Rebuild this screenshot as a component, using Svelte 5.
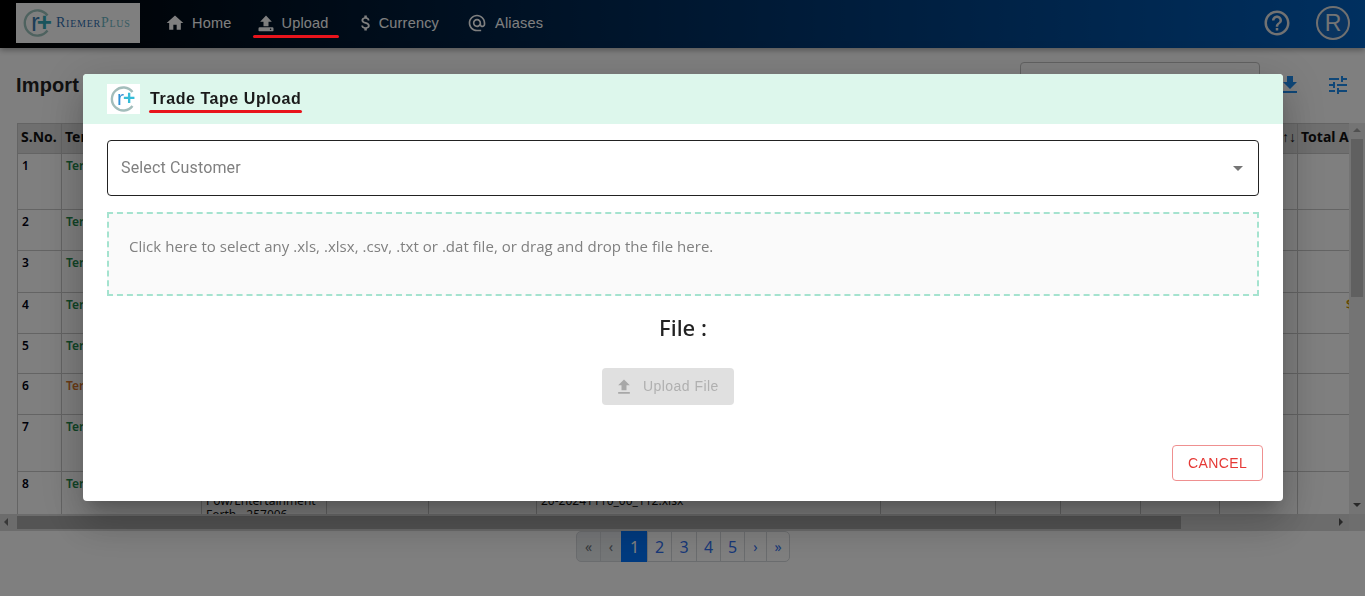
<script lang="ts">
	const navItems = [
		{ label: 'Home', icon: 'home' },
		{ label: 'Upload', icon: 'upload' },
		{ label: 'Currency', icon: 'dollar' },
		{ label: 'Aliases', icon: 'at' }
	]

	const widths = [44, 140, 125, 102, 108, 344, 115, 65, 80, 79, 78, 120]
	const headers = ['S.No.', 'Term', 'Name', 'Type', 'Date', 'File Name', 'Status', 'Rows', 'Total', 'Count', '↑↓', 'Total A']

	const rows = [
		{ h: 56, tone: 'green' },
		{ h: 41, tone: 'green' },
		{ h: 42, tone: 'green' },
		{ h: 41, tone: 'green', total: '$' },
		{ h: 40, tone: 'green' },
		{ h: 41, tone: 'orange' },
		{ h: 57, tone: 'green' },
		{
			h: 60,
			tone: 'green',
			name: ['Trade Tape', 'Pow/Entertainment', 'Forth - 257006'],
			file: ['Trade Tape', '20-20241110_00_112.xlsx']
		}
	]

	const pages = [
		{ label: '«', w: 25, kind: 'off' },
		{ label: '‹', w: 22, kind: 'off' },
		{ label: '1', w: 27, kind: 'active' },
		{ label: '2', w: 25, kind: '' },
		{ label: '3', w: 26, kind: '' },
		{ label: '4', w: 25, kind: '' },
		{ label: '5', w: 25, kind: '' },
		{ label: '›', w: 23, kind: 'chevron' },
		{ label: '»', w: 24, kind: 'chevron' }
	]
</script>

<div class="page">
	<header class="topbar">
		<div class="brand">
			<svg class="brand-ring" viewBox="0 0 28 28" aria-hidden="true">
				<path d="M24.5 6.5A12.6 12.6 0 1 0 24.5 21.5" fill="none" stroke="#9cc4bf" stroke-width="2.4" />
			</svg>
			<span class="brand-mark">r<b>+</b></span>
			<span class="brand-name">Riemer<em>Plus</em></span>
		</div>
		<nav class="nav">
			{#each navItems as item}
				<div class="nav-item {item.icon}">
					<svg viewBox="0 0 24 24" class="nav-icon" aria-hidden="true">
						{#if item.icon === 'home'}
							<path d="M10 20v-6h4v6h5v-8h3L12 3 2 12h3v8z" fill="currentColor" />
						{:else if item.icon === 'upload'}
							<path d="M12 3l7 7.5h-4v5.5H9v-5.5H5z" fill="currentColor" />
							<path fill-rule="evenodd" d="M4.5 17h15a1.5 1.5 0 0 1 1.5 1.5V21a.8.8 0 0 1-.8.8H3.8A.8.8 0 0 1 3 21v-2.5A1.5 1.5 0 0 1 4.5 17zM17.5 18.6a.9.9 0 1 0 0 1.8a.9.9 0 0 0 0-1.8z" fill="currentColor" />
						{:else if item.icon === 'dollar'}
							<path d="M11.8 10.9c-2.27-.59-3-1.2-3-2.15 0-1.09 1.01-1.85 2.7-1.85 1.78 0 2.44.85 2.5 2.1h2.21c-.07-1.72-1.12-3.3-3.21-3.81V3h-3v2.16c-1.94.42-3.5 1.68-3.5 3.61 0 2.31 1.91 3.46 4.7 4.13 2.5.6 3 1.48 3 2.41 0 .69-.49 1.79-2.7 1.79-2.06 0-2.87-.92-2.98-2.1h-2.2c.12 2.19 1.76 3.42 3.68 3.83V21h3v-2.15c1.95-.37 3.5-1.5 3.5-3.55 0-2.84-2.43-3.81-4.7-4.4z" fill="currentColor" />
						{:else}
							<path d="M12 2C6.48 2 2 6.48 2 12s4.48 10 10 10h5v-2h-5c-4.34 0-8-3.66-8-8s3.66-8 8-8 8 3.66 8 8v1.43c0 .79-.71 1.57-1.5 1.57s-1.5-.78-1.5-1.57V12c0-2.76-2.24-5-5-5s-5 2.24-5 5 2.24 5 5 5c1.38 0 2.64-.56 3.54-1.47.65.89 1.77 1.47 2.96 1.47 1.97 0 3.5-1.6 3.5-3.57V12c0-5.52-4.48-10-10-10zm0 13c-1.66 0-3-1.34-3-3s1.34-3 3-3 3 1.34 3 3-1.34 3-3 3z" fill="currentColor" />
						{/if}
					</svg>
					<span>{item.label}</span>
				</div>
			{/each}
		</nav>
		<div class="topbar-right">
			<svg viewBox="0 0 24 24" class="help" aria-hidden="true">
				<path d="M11 18h2v-2h-2v2zm1-16C6.48 2 2 6.48 2 12s4.48 10 10 10 10-4.48 10-10S17.52 2 12 2zm0 18c-4.41 0-8-3.59-8-8s3.59-8 8-8 8 3.59 8 8-3.59 8-8 8zm0-14c-2.21 0-4 1.79-4 4h2c0-1.1.9-2 2-2s2 .9 2 2c0 2-3 1.75-3 5h2c0-2.25 3-2.5 3-5 0-2.21-1.79-4-4-4z" fill="currentColor" />
			</svg>
			<div class="avatar">R</div>
		</div>
	</header>

	<section class="title-row">
		<h1>Import History</h1>
		<div class="tools">
			<div class="search"></div>
			<svg viewBox="0 0 24 24" class="tool download" aria-hidden="true">
				<path d="M19 9h-4V3H9v6H5l7 7 7-7zM5 18v2h14v-2H5z" fill="currentColor" />
			</svg>
			<svg viewBox="0 0 24 24" class="tool" aria-hidden="true">
				<path d="M3 17v2h6v-2H3zM3 5v2h10V5H3zm10 16v-2h8v-2h-8v-2h-2v6h2zM7 9v2H3v2h4v2h2V9H7zm14 4v-2H11v2h10zm-6-4h2V7h4V5h-4V3h-2v6z" fill="currentColor" />
			</svg>
		</div>
	</section>

	<section class="grid-wrap">
		<div class="grid-area">
			<div class="table-clip">
				<table>
					<colgroup>
						{#each widths as w}
							<col style="width: {w}px" />
						{/each}
					</colgroup>
					<thead>
						<tr>
							{#each headers as h}
								<th class:sort={h === '↑↓'}>{h}</th>
							{/each}
						</tr>
					</thead>
					<tbody>
						{#each rows as row, i}
							<tr style="height: {row.h}px">
								<td class="num">{i + 1}</td>
								<td class={row.tone}>Terminated</td>
								<td class="low">
									{#each row.name ?? [] as line}
										<div>{line}</div>
									{/each}
								</td>
								<td></td>
								<td></td>
								<td class="low">
									{#each row.file ?? [] as line}
										<div>{line}</div>
									{/each}
								</td>
								<td></td>
								<td></td>
								<td></td>
								<td></td>
								<td></td>
								<td class="total">{row.total ?? ''}</td>
							</tr>
						{/each}
					</tbody>
				</table>
			</div>
			<div class="hbar">
				<span class="arrow left"></span>
				<div class="hthumb"></div>
				<span class="arrow right"></span>
			</div>
		</div>
		<div class="vbar">
			<span class="arrow up"></span>
			<div class="vthumb"></div>
			<span class="arrow down"></span>
			<div class="corner"></div>
		</div>
	</section>

	<div class="pager">
		{#each pages as p}
			<span class="page-btn {p.kind}" style="width: {p.w}px">{p.label}</span>
		{/each}
	</div>
</div>

<div class="overlay">
	<div class="modal">
		<div class="modal-head">
			<div class="modal-logo">
				<svg viewBox="0 0 26 26" aria-hidden="true">
					<path d="M22.5 6A11.5 11.5 0 1 0 22.5 20" fill="none" stroke="#a3bdbb" stroke-width="2.4" />
				</svg>
				<span class="logo-mark">r<b>+</b></span>
			</div>
			<h2>Trade Tape Upload</h2>
		</div>
		<div class="modal-body">
			<div class="select">
				<span>Select Customer</span>
				<i class="caret"></i>
			</div>
			<div class="drop">Click here to select any .xls, .xlsx, .csv, .txt or .dat file, or drag and drop the file here.</div>
			<div class="file-label">File :</div>
			<div class="upload-row">
				<button class="upload-btn" disabled>
					<svg viewBox="0 0 24 24" aria-hidden="true">
						<path d="M9 16h6v-6h4l-7-7-7 7h4v6zm-4 2h14v2H5v-2z" fill="currentColor" />
					</svg>
					Upload File
				</button>
			</div>
			<div class="actions">
				<button class="cancel">CANCEL</button>
			</div>
		</div>
	</div>
</div>

<div class="mark mark-nav"></div>
<div class="mark mark-title"></div>

<style>
	:global(body) {
		margin: 0;
		background: #fff;
		overflow: hidden;
	}

	.page {
		height: 596px;
		width: 1365px;
		overflow: hidden;
		display: flex;
		flex-direction: column;
		font-family: 'Liberation Sans', Arial, sans-serif;
		background: #fff;
	}

	.topbar {
		height: 48px;
		flex-shrink: 0;
		display: flex;
		align-items: center;
		background: linear-gradient(90deg, #000 0%, #003a78 62%, #0060c0 100%);
		padding: 0 15px 0 16px;
		box-sizing: border-box;
		box-shadow: 0 2px 6px rgba(0, 0, 0, 0.35);
		position: relative;
	}

	.brand {
		position: relative;
		width: 124px;
		height: 40px;
		background: #fff;
		flex-shrink: 0;
		margin-top: -2px;
	}

	.brand-ring {
		position: absolute;
		left: 7px;
		top: 6px;
		width: 28px;
		height: 28px;
	}

	.brand-mark {
		position: absolute;
		left: 15px;
		top: 5px;
		font: 400 26px/28px 'Liberation Sans', sans-serif;
		color: #3c7db0;
		letter-spacing: -3px;
	}

	.brand-mark b {
		color: #35a9b8;
	}

	.brand-name {
		position: absolute;
		left: 40px;
		top: 12px;
		font: 400 14px/15px 'Liberation Serif', serif;
		font-variant: small-caps;
		color: #2f6fb0;
		letter-spacing: 0.75px;
	}

	.brand-name em {
		font-style: normal;
		color: #6db6c4;
	}

	.nav {
		display: flex;
		margin-left: 25px;
		gap: 25px;
		margin-top: -2px;
	}

	.nav-item {
		display: flex;
		align-items: center;
		gap: 7px;
		color: #fff;
		font-size: 14.5px;
		letter-spacing: 0.2px;
	}

	.nav-item.upload {
		gap: 5px;
	}

	.nav-item.dollar {
		gap: 3px;
		margin-left: 2px;
	}

	.nav-item.at {
		gap: 8px;
		margin-left: 3px;
	}

	.nav-icon {
		width: 20px;
		height: 20px;
	}

	.topbar-right {
		margin-left: auto;
		display: flex;
		align-items: center;
		gap: 24px;
		margin-top: -2px;
	}

	.help {
		width: 30px;
		height: 30px;
		color: #e4e4e4;
	}

	.avatar {
		width: 34px;
		height: 34px;
		box-sizing: border-box;
		border: 2px solid #e0e0e0;
		border-radius: 50%;
		color: #e8e8e8;
		background: rgba(255, 255, 255, 0.08);
		font-size: 23px;
		display: flex;
		align-items: center;
		justify-content: center;
	}

	.title-row {
		height: 75px;
		flex-shrink: 0;
		display: flex;
		align-items: center;
		padding: 0 15px 0 16px;
		box-sizing: border-box;
	}

	h1 {
		margin: 0;
		font-size: 20px;
		font-weight: 700;
		letter-spacing: 0.15px;
		color: #222;
	}

	.tools {
		margin-left: auto;
		display: flex;
		align-items: center;
		color: #1f8ef1;
		margin-top: -2px;
	}

	.search {
		width: 238px;
		height: 40px;
		border: 1px solid #c4c4c4;
		border-radius: 4px;
		margin-right: 18px;
		margin-top: -4px;
	}

	.tool {
		width: 24px;
		height: 24px;
	}

	.download {
		margin-right: 24px;
	}

	.grid-wrap {
		height: 408px;
		flex-shrink: 0;
		display: flex;
	}

	.grid-area {
		width: 1349px;
		display: flex;
		flex-direction: column;
	}

	.table-clip {
		height: 391px;
		overflow: hidden;
		padding-left: 17px;
	}

	table {
		border-collapse: collapse;
		table-layout: fixed;
		width: 1400px;
		font-family: 'Noto Sans', sans-serif;
		font-size: 12px;
		line-height: 14px;
		color: #111;
	}

	th {
		height: 26px;
		background: #dedede;
		border: 1px solid #c8c8c8;
		padding: 0 4px 3px 3px;
		text-align: left;
		font-size: 14px;
		font-weight: 700;
		white-space: nowrap;
		overflow: hidden;
	}

	th.sort {
		text-align: right;
		font-weight: 400;
		padding-right: 1px;
	}

	td {
		border: 1px solid #c8c8c8;
		vertical-align: top;
		padding: 5px 4px;
		overflow: hidden;
		font-size: 12px;
	}

	td.low {
		padding-top: 8px;
		white-space: nowrap;
	}

	td.num {
		font-weight: 600;
		color: #001;
	}

	td.green {
		color: #1f8a4c;
		font-weight: 600;
	}

	td.orange {
		color: #d6772c;
		font-weight: 600;
	}

	td.total {
		padding-left: 48px;
		font-weight: 600;
		color: #c89000;
	}

	.hbar {
		height: 17px;
		background: #d8d8d8;
		position: relative;
		display: flex;
		align-items: center;
	}

	.hthumb {
		position: absolute;
		left: 17px;
		width: 1164px;
		top: 2px;
		bottom: 2px;
		background: #a8a8a8;
	}

	.vbar {
		width: 16px;
		background: #e8e8e8;
		position: relative;
	}

	.vthumb {
		position: absolute;
		left: 2px;
		right: 2px;
		top: 16px;
		height: 158px;
		background: #c0c0c0;
	}

	.corner {
		position: absolute;
		left: 0;
		right: 0;
		bottom: 0;
		height: 17px;
		background: #dcdcdc;
	}

	.arrow {
		position: absolute;
		width: 0;
		height: 0;
		border: 4px solid transparent;
	}

	.arrow.left {
		left: 4px;
		top: 4px;
		border-left: 0;
		border-right-color: #707070;
	}

	.arrow.right {
		right: 6px;
		top: 4px;
		border-right: 0;
		border-left-color: #505050;
	}

	.arrow.up {
		left: 4px;
		top: 5px;
		border-top: 0;
		border-bottom-color: #a0a0a0;
	}

	.arrow.down {
		left: 4px;
		top: 380px;
		border-bottom: 0;
		border-top-color: #505050;
	}

	.pager {
		display: flex;
		align-self: flex-start;
		margin-left: 576px;
		height: 31px;
		font-family: 'Noto Sans', sans-serif;
	}

	.page-btn {
		box-sizing: border-box;
		display: flex;
		align-items: center;
		justify-content: center;
		border: 1px solid #d5d8dc;
		margin-left: -1px;
		color: #3070f0;
		font-size: 16px;
		background: #fff;
	}

	.page-btn.chevron {
		font-size: 14px;
	}

	.page-btn.off {
		color: #6c757d;
		background: #e9ecef;
		font-size: 14px;
	}

	.page-btn.active {
		background: #0075ff;
		color: #fff;
		border-color: #0075ff;
	}

	.page-btn:first-child {
		border-radius: 5px 0 0 5px;
		margin-left: 0;
	}

	.page-btn:last-child {
		border-radius: 0 5px 5px 0;
	}

	.overlay {
		position: fixed;
		inset: 0;
		background: rgba(0, 0, 0, 0.5);
		padding: 74px 82px 0 83px;
		box-sizing: border-box;
	}

	.modal {
		width: 1200px;
		height: 427px;
		background: #fff;
		border-radius: 4px;
		box-shadow:
			0 11px 15px -7px rgba(0, 0, 0, 0.2),
			0 24px 38px 3px rgba(0, 0, 0, 0.14),
			0 9px 46px 8px rgba(0, 0, 0, 0.12);
		overflow: hidden;
		font-family: 'Roboto', sans-serif;
	}

	.modal-head {
		height: 50px;
		background: #ddf7ec;
		display: flex;
		align-items: center;
		padding-left: 24px;
	}

	.modal-logo {
		position: relative;
		width: 33px;
		height: 30px;
		background: #fff;
	}

	.modal-logo svg {
		position: absolute;
		left: 3px;
		top: 2px;
		width: 26px;
		height: 26px;
	}

	.logo-mark {
		position: absolute;
		left: 10px;
		top: 2px;
		font: 400 21px/24px 'Liberation Sans', sans-serif;
		color: #2f8fd6;
		letter-spacing: -1px;
	}

	.logo-mark b {
		color: #35bcd8;
	}

	h2 {
		margin: 0 0 0 10px;
		font: 700 16px/20px 'Liberation Sans', Arial, sans-serif;
		letter-spacing: 0.55px;
		color: #1a1a1a;
	}

	.modal-body {
		padding: 16px 24px 0;
	}

	.select {
		height: 56px;
		box-sizing: border-box;
		border: 1px solid #222;
		border-radius: 4px;
		padding: 0 14px 2px 13px;
		display: flex;
		align-items: center;
		justify-content: space-between;
		font-size: 16px;
		letter-spacing: 0.15px;
		color: #808080;
	}

	.caret {
		width: 0;
		height: 0;
		border: 5px solid transparent;
		border-bottom: 0;
		border-top-color: #757575;
		margin: 2px 1px 0 0;
	}

	.drop {
		margin-top: 16px;
		height: 84px;
		box-sizing: border-box;
		border: 2px dashed #a5e3cf;
		background: #fafafa;
		padding: 21px 20px;
		font: 400 15px/22px 'Open Sans', sans-serif;
		letter-spacing: 0.03px;
		color: #808080;
	}

	.file-label {
		margin-top: 16px;
		text-align: center;
		font: 500 22px/30px 'Noto Sans', sans-serif;
		color: #222;
	}

	.upload-row {
		display: flex;
		justify-content: center;
		margin-top: 26px;
		padding-right: 30px;
	}

	.upload-btn {
		width: 132px;
		height: 37px;
		border: 0;
		border-radius: 4px;
		background: #e0e0e0;
		color: #b0b0b0;
		font: 400 14px/37px 'Liberation Sans', sans-serif;
		letter-spacing: 0.45px;
		display: flex;
		align-items: center;
		justify-content: flex-start;
		gap: 9px;
		padding: 0 0 0 12px;
	}

	.upload-btn svg {
		width: 20px;
		height: 20px;
		color: #a8a8a8;
	}

	.actions {
		display: flex;
		justify-content: flex-end;
		margin-top: 40px;
		margin-right: -4px;
	}

	.cancel {
		width: 91px;
		height: 36px;
		background: #fff;
		border: 1px solid #ef9090;
		border-radius: 4px;
		color: #e53935;
		font: 400 14px/34px 'Liberation Sans', sans-serif;
		letter-spacing: 0.4px;
		padding: 0;
	}

	/* red review marks drawn over the screenshot */
	.mark {
		position: fixed;
		height: 3px;
		border-radius: 2px;
		background: #e8141c;
	}

	.mark-nav {
		left: 253px;
		top: 35px;
		width: 86px;
	}

	.mark-title {
		left: 149px;
		top: 110px;
		width: 153px;
	}
</style>
